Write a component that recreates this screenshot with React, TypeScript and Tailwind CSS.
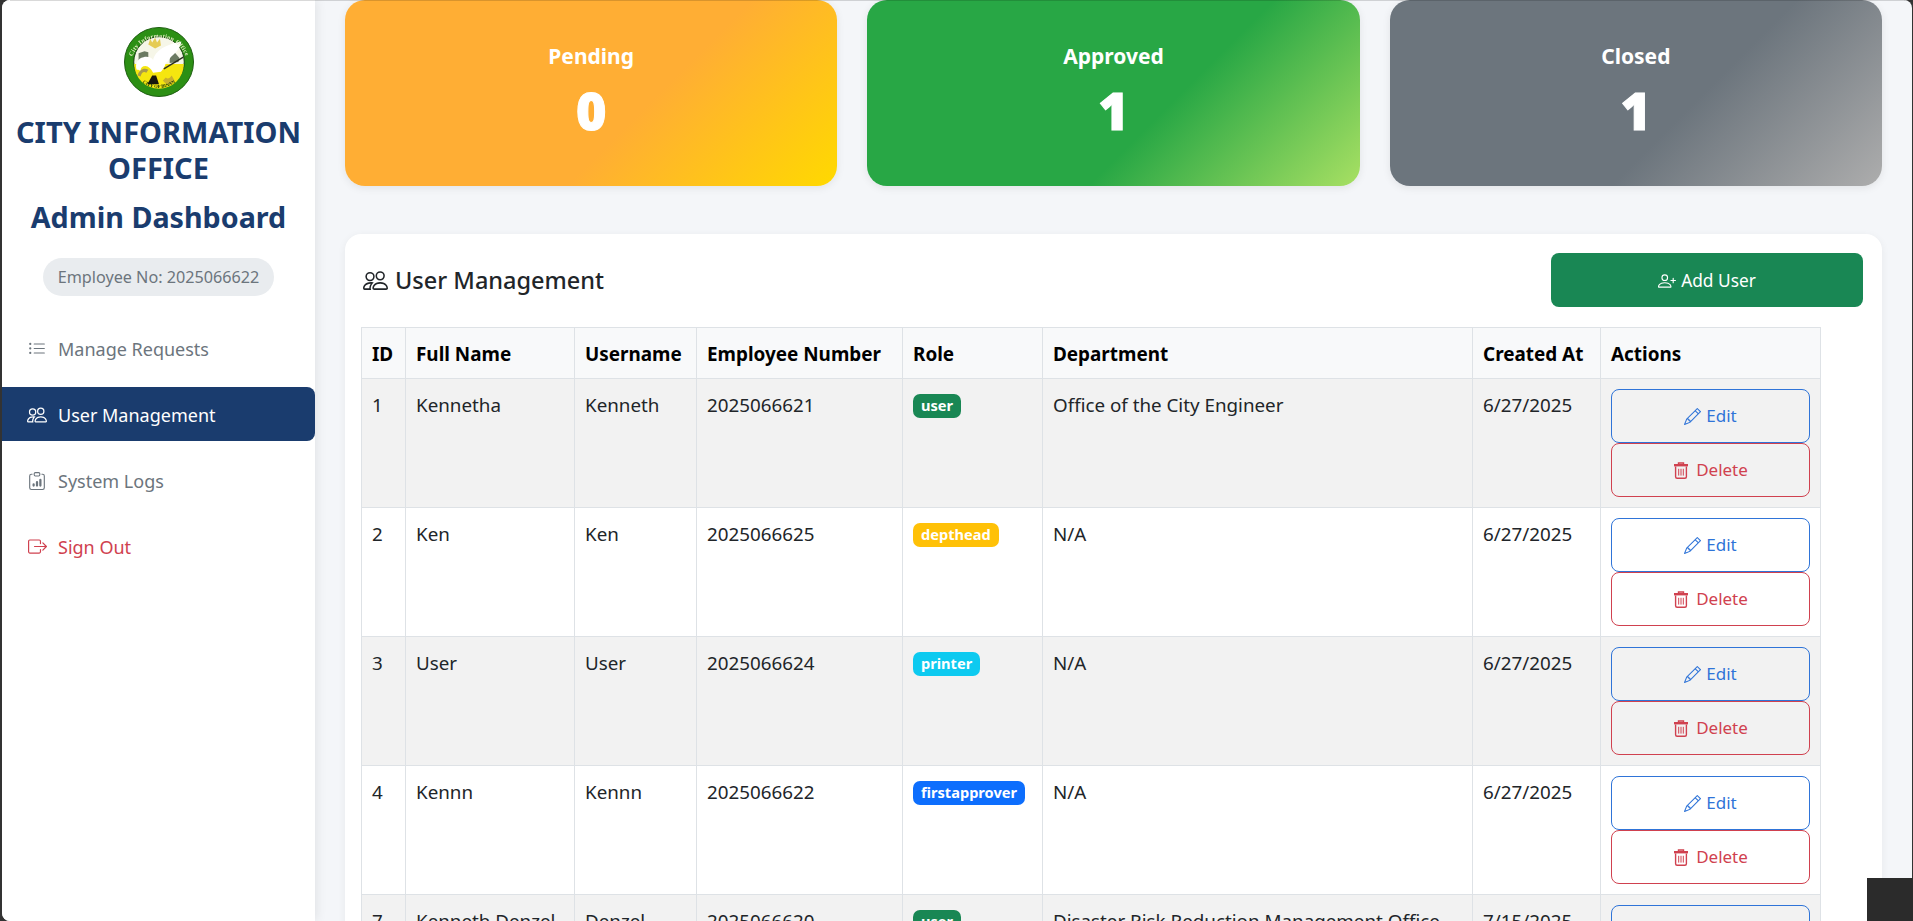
import { BsListUl, BsPeople, BsClipboardData, BsBoxArrowRight, BsPersonPlus, BsPencil } from "react-icons/bs";

const rows = [
  { id: 1, name: "Kennetha", user: "Kenneth", emp: "2025066621", role: "user", roleClass: "bg-[#198754]", dept: "Office of the City Engineer", date: "6/27/2025" },
  { id: 2, name: "Ken", user: "Ken", emp: "2025066625", role: "depthead", roleClass: "bg-[#ffc107]", dept: "N/A", date: "6/27/2025" },
  { id: 3, name: "User", user: "User", emp: "2025066624", role: "printer", roleClass: "bg-[#0dcaf0]", dept: "N/A", date: "6/27/2025" },
  { id: 4, name: "Kennn", user: "Kennn", emp: "2025066622", role: "firstapprover", roleClass: "bg-[#0d6efd]", dept: "N/A", date: "6/27/2025" },
  { id: 7, name: "Kenneth Denzel", user: "Denzel", emp: "2025066620", role: "user", roleClass: "bg-[#198754]", dept: "Disaster Risk Reduction Management Office", date: "7/15/2025" },
];

function Logo() {
  return (
    <svg width="70" height="70" viewBox="0 0 72 72" className="blur-[0.3px]">
      <defs>
        <path id="logoTop" d="M7 40a29 29 0 0 1 58 0" />
        <path id="logoBottom" d="M14 52a28 28 0 0 0 44 0" />
      </defs>
      <circle cx="36" cy="36" r="35.5" fill="#2c8f14" />
      <circle cx="36" cy="36" r="35.5" fill="none" stroke="#1c5c10" strokeWidth="1" />
      <circle cx="36" cy="36" r="26" fill="#f6f6e8" stroke="#123a0b" strokeWidth="1" />
      <path d="M10.5 38h51a25.5 25.5 0 0 1-51 0Z" fill="#f5e60f" />
      <path d="M15 27l6-2 4 1 0 7-10 2Z" fill="#6b7a62" />
      <path d="M47 27l5-1 5 6-1 4-9 1Z" fill="#6b7a62" />
      <path d="M25 18l2-6 2 4 3-5 2 5 3-4 1 7-6 3Z" fill="#e5cb55" />
      <path d="M13 44c-2-6 1-12 7-13 4-1 8 0 10 3 2-8 9-15 29-19-1 7-6 12-10 15-2 2-3 5-6 7-1 4-3 7-5 9l-8 1c-2-4-5-7-8-7-3 0-5 2-5 5-2-1-3-1-4-1Z" fill="#ffffff" />
      <path d="M14 50c1-6 7-9 11-6l-2 3c-3-2-5 0-6 4Z" fill="#a99a4c" />
      <path d="M24 59l5-9 4 0 3 9Z" fill="#17170e" />
      <path d="M40 55c3 5 9 5 12 0l-3-5c-2 3-4 4-6 2Z" fill="#c9b02e" />
      <path d="M41 43l20-12" stroke="#2b3020" strokeWidth="1.5" />
      <text fontSize="6.2" fontFamily="'Liberation Serif',serif" fontWeight="700" fill="#e9efc8" letterSpacing="0.35">
        <textPath href="#logoTop" startOffset="50%" textAnchor="middle">City Information Office</textPath>
      </text>
      <text fontSize="4.8" fontFamily="'Liberation Serif',serif" fontWeight="700" fill="#0d2b08">
        <textPath href="#logoBottom" startOffset="50%" textAnchor="middle">CITY OF BINAN</textPath>
      </text>
    </svg>
  );
}

function TrashIcon() {
  return (
    <svg width="16" height="17" viewBox="0 0 16 17" fill="none" stroke="currentColor">
      <path d="M1 3.2h14" strokeWidth="2.4" />
      <path d="M5.5 2V1h5v1" strokeWidth="1.4" />
      <path d="M2.6 4.5v10.2c0 .9.6 1.5 1.5 1.5h7.8c.9 0 1.5-.6 1.5-1.5V4.5" strokeWidth="1.4" />
      <path d="M5.7 6.8v6.8M8 6.8v6.8M10.3 6.8v6.8" strokeWidth="1" />
    </svg>
  );
}

function NavItem({ icon, label, className }: { icon: React.ReactNode; label: string; className: string }) {
  return (
    <div className={`flex items-center h-[54px] pl-[25px] gap-[11px] rounded-r-[8px] text-[18px] ${className}`}>
      <span className="w-[20px] flex justify-center pt-[1px]">{icon}</span>
      <span className="pt-[3px]">{label}</span>
    </div>
  );
}

function Stat({ label, value, className }: { label: string; value: string; className: string }) {
  return (
    <div className={`flex-1 h-[186px] rounded-[20px] flex flex-col items-center text-white shadow-[0_2px_8px_rgba(0,0,0,0.08)] ${className}`}>
      <div className="mt-[41px] text-[21px] font-bold leading-[30px]">{label}</div>
      <div className="mt-[10px] text-[52px] font-extrabold leading-[58px] font-['Open_Sans',sans-serif] [-webkit-text-stroke:1px_white]">{value}</div>
    </div>
  );
}

const th = "border border-[#dee2e6] bg-[#f8f9fa] px-[10px] pt-[3px] text-left align-middle font-bold text-black text-[18.9px] h-[51px]";
const td = "border border-[#dee2e6] px-[10px] pt-[13px] align-top text-[#212529] text-[18.8px] leading-[27px]";

export default function App() {
  return (
    <div className="relative h-[921px] w-[1913px] overflow-hidden bg-[#333333] pl-[2px] pr-[1px] font-['Noto_Sans',sans-serif]">
      <div className="flex h-[921px] overflow-hidden rounded-tl-[8px] rounded-tr-[8px] rounded-bl-[8px] bg-[#f4f6f9]">
        <aside className="w-[313px] shrink-0 bg-white shadow-[2px_0_10px_rgba(0,0,0,0.08)] flex flex-col">
          <div className="mt-[27px] flex justify-center"><Logo /></div>
          <h1 className="mt-[17px] text-center text-[29px] font-bold leading-[36px] text-[#1a3c6e]">CITY INFORMATION OFFICE</h1>
          <h2 className="mt-[13px] text-center text-[28.7px] font-bold leading-[36px] text-[#1a3c6e]">Admin Dashboard</h2>
          <div className="mt-[23px] self-center h-[38px] px-[15px] flex items-center rounded-full bg-[#e9ecef] text-[16.2px] text-[#6c757d]">Employee No: 2025066622</div>
          <nav className="mt-[25px] flex flex-col gap-[12px]">
            <NavItem icon={<BsListUl size={18} />} label="Manage Requests" className="text-[#6c757d]" />
            <NavItem icon={<BsPeople size={20} />} label="User Management" className="bg-[#1a3c6e] text-white" />
            <NavItem icon={<BsClipboardData size={18} />} label="System Logs" className="text-[#6c757d]" />
            <NavItem icon={<BsBoxArrowRight size={19} />} label="Sign Out" className="text-[#d0414f]" />
          </nav>
        </aside>
        <main className="flex-1 min-w-0 pl-[30px] pr-[30px]">
          <div className="flex gap-[30px]">
            <Stat label="Pending" value="0" className="bg-[linear-gradient(135deg,#ffae34_60%,#ffd900_100%)]" />
            <Stat label="Approved" value="1" className="bg-[linear-gradient(135deg,#28a745_60%,#a8e063_100%)]" />
            <Stat label="Closed" value="1" className="bg-[linear-gradient(135deg,#6c757d_60%,#adadad_100%)]" />
          </div>
          <section className="mt-[48px] rounded-[16px] bg-white pl-[16px] pr-[19px] pt-[19px] h-[800px] shadow-[0_2px_8px_rgba(0,0,0,0.06)]">
            <div className="flex items-center justify-between h-[54px]">
              <div className="ml-[2px] mt-[1px] flex items-center gap-[7px] text-[23.5px] font-medium text-[#212529]"><BsPeople size={25} /><span>User Management</span></div>
              <button className="flex w-[312px] h-[54px] pt-[1px] items-center justify-center gap-[5px] rounded-[8px] bg-[#198754] text-[17.3px] text-white"><BsPersonPlus size={18} />Add User</button>
            </div>
            <table className="mt-[20px] w-[1459px] table-fixed border-collapse">
              <colgroup>
                <col className="w-[44px]" /><col className="w-[169px]" /><col className="w-[122px]" /><col className="w-[206px]" /><col className="w-[140px]" /><col className="w-[430px]" /><col className="w-[128px]" /><col className="w-[220px]" />
              </colgroup>
              <thead>
                <tr>
                  {["ID", "Full Name", "Username", "Employee Number", "Role", "Department", "Created At", "Actions"].map((h) => (
                    <th key={h} className={th}>{h}</th>
                  ))}
                </tr>
              </thead>
              <tbody>
                {rows.map((r, i) => (
                  <tr key={r.id} className={i % 2 === 0 ? "bg-[#f2f2f2]" : "bg-white"}>
                    <td className={td}>{r.id}</td>
                    <td className={td}>{r.name}</td>
                    <td className={td}>{r.user}</td>
                    <td className={td}>{r.emp}</td>
                    <td className="border border-[#dee2e6] px-[10px] pt-[13px] align-top leading-[27px]">
                      <span className={`inline-flex h-[24px] items-center rounded-[7px] px-[8px] text-[14.6px] font-bold text-white ${r.roleClass}`}>{r.role}</span>
                    </td>
                    <td className={td}>{r.dept}</td>
                    <td className={td}>{r.date}</td>
                    <td className="border border-[#dee2e6] px-[10px] py-[10px] align-top">
                      <div className="flex flex-col">
                        <button className="flex h-[54px] w-full items-center justify-center gap-[5px] rounded-[8px] border border-[#2f74d8] text-[17px] text-[#2f74d8]"><BsPencil size={17} />Edit</button>
                        <button className="flex h-[54px] w-full items-center justify-center gap-[7px] rounded-[8px] border border-[#d0414f] text-[17px] text-[#d0414f]"><TrashIcon />Delete</button>
                      </div>
                    </td>
                  </tr>
                ))}
              </tbody>
            </table>
          </section>
        </main>
      </div>
      <div className="absolute left-[10px] right-[8px] top-0 h-px bg-black/15" />
      <div className="absolute right-0 bottom-0 h-[43px] w-[46px] bg-[#2b2b2b]" />
    </div>
  );
}
